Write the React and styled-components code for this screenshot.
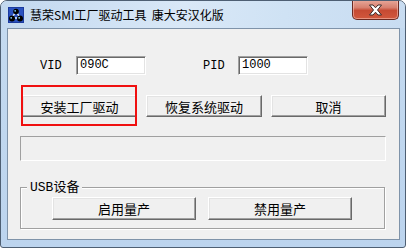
import React from 'react'
import styled, { createGlobalStyle } from 'styled-components'

////////Styles///////////
const Global = createGlobalStyle`
  html, body {
    margin: 0;
    padding: 0;
    background: #ffffff;
  }
`
const Window = styled.div`
  position: relative;
  width: 406px;
  height: 248px;
  box-sizing: border-box;
  border: 1px solid #4e5f73;
  border-radius: 7px 7px 3px 3px;
  background: linear-gradient(to bottom, #d6e6f6 0, #c4daf0 27px, #bcd4ee 100%);
  display: flex;
  flex-direction: column;
  overflow: hidden;
`
const TitleBar = styled.div`
  height: 27px;
  display: flex;
  align-items: flex-start;
  padding: 0 6px 0 7px;
  background: linear-gradient(100deg, #c2d8ef 0%, #d9e8f7 45%, #cfe2f4 70%, #c8dcf1 100%);
`
const AppIcon = styled.svg`
  width: 16px;
  height: 16px;
  margin-top: 6px;
  flex: none;
`
const Title = styled.span`
  margin-left: 6px;
  line-height: 27px;
  font-family: 'Noto Sans CJK SC', 'Microsoft YaHei', sans-serif;
  font-size: 12px;
  color: #000;
  white-space: pre;
`
const CloseButton = styled.div`
  margin-left: auto;
  margin-top: -1px;
  width: 47px;
  height: 20px;
  box-sizing: border-box;
  border: 1px solid #6b2a22;
  border-top: none;
  border-radius: 0 0 5px 5px;
  background: linear-gradient(to bottom, #e8a99b 0%, #d7806f 40%, #c64a33 55%, #d1583d 100%);
  box-shadow: inset 0 0 0 1px rgba(255, 210, 200, 0.5);
  display: flex;
  align-items: center;
  justify-content: center;
`
const Client = styled.div`
  margin: 0 5px 0 6px;
  height: 212px;
  box-sizing: border-box;
  border: 1px solid #7f93a9;
  background: #f0f0f0;
  position: relative;
  display: flex;
  flex-direction: column;
  font-family: 'Noto Sans CJK SC', sans-serif;
  color: #000;
`
const IdRow = styled.div`
  display: flex;
  align-items: center;
  margin: 27px 0 0 32px;
  height: 19px;
`
const IdLabel = styled.span`
  width: ${({ w }) => w}px;
  font-family: 'Liberation Mono', 'Noto Sans CJK SC', monospace;
  font-size: 12px;
`
const Edit = styled.div`
  width: 70px;
  height: 19px;
  box-sizing: border-box;
  margin-right: ${({ gap }) => gap || 0}px;
  background: #fff;
  border-top: 1px solid #a0a0a0;
  border-left: 1px solid #a0a0a0;
  border-right: 1px solid #fff;
  border-bottom: 1px solid #fff;
  box-shadow: inset 1px 1px 0 #696969, inset -1px -1px 0 #e3e3e3;
  padding-left: 3px;
  font-family: 'Liberation Mono', monospace;
  font-size: 12px;
  line-height: 17px;
`
const ButtonRow = styled.div`
  display: flex;
  gap: 9px;
  margin: 20px 0 0 14px;
`
const Button = styled.div`
  width: ${({ w }) => w || 115}px;
  height: ${({ h }) => h || 22}px;
  box-sizing: border-box;
  background: #f0f0f0;
  border-top: 1px solid #fff;
  border-left: 1px solid #fff;
  border-right: 1px solid #696969;
  border-bottom: 1px solid #696969;
  box-shadow: inset -1px -1px 0 #a0a0a0, inset 1px 1px 0 #e3e3e3;
  display: flex;
  align-items: center;
  justify-content: center;
  font-size: 13px;
`
const Status = styled.div`
  margin: 19px 0 0 12px;
  width: 366px;
  height: 25px;
  box-sizing: border-box;
  border-top: 1px solid #a0a0a0;
  border-left: 1px solid #a0a0a0;
  border-right: 1px solid #fff;
  border-bottom: 1px solid #fff;
`
const Group = styled.div`
  position: relative;
  margin: 26px 0 0 12px;
  width: 365px;
  height: 42px;
  box-sizing: border-box;
  border: 1px solid #a0a0a0;
  box-shadow: inset 1px 1px 0 #fff, 1px 1px 0 #fff;
  display: flex;
  gap: 12px;
  padding: 9px 0 0 31px;
`
const Legend = styled.span`
  position: absolute;
  top: -9px;
  left: 6px;
  padding: 0 3px;
  background: #f0f0f0;
  font-size: 13px;
  line-height: 17px;
  font-family: 'Liberation Mono', 'Noto Sans CJK SC', monospace;
`
const Mark = styled.div`
  position: absolute;
  left: 13px;
  top: 56px;
  width: 116px;
  height: 41px;
  box-sizing: border-box;
  border: 2px solid #f01010;
  pointer-events: none;
`

const App = () => {
  return (
    <>
      <Global />
      <Window>
        <TitleBar>
          <AppIcon viewBox="0 0 16 16">
            <rect x="0" y="0" width="16" height="16" fill="#1b3a9e" />
            <rect x="1" y="1" width="14" height="14" fill="#2a52c0" />
            <path d="M8 4 L4 11 M8 4 L12 11 M4 11 L12 11" stroke="#e8f4ff" strokeWidth="1.5" />
            <circle cx="8" cy="4.5" r="2.8" fill="#000" />
            <circle cx="4" cy="11.5" r="3" fill="#000" />
            <circle cx="12" cy="11.5" r="3" fill="#000" />
            <circle cx="7.2" cy="3.8" r="0.9" fill="#7fd0ff" />
            <circle cx="3.2" cy="10.8" r="0.9" fill="#7fd0ff" />
            <circle cx="11.2" cy="10.8" r="0.9" fill="#7fd0ff" />
          </AppIcon>
          <Title>慧荣SMI工厂驱动工具  康大安汉化版</Title>
          <CloseButton>
            <svg width="15" height="12" viewBox="0 0 15 12">
              <path
                d="M1.5 1 H5 L7.5 3.8 L10 1 H13.5 L9.5 6 L13.5 11 H10 L7.5 8.2 L5 11 H1.5 L5.5 6 Z"
                fill="#fff"
                stroke="#3d2a28"
                strokeWidth="1"
                strokeLinejoin="round"
              />
            </svg>
          </CloseButton>
        </TitleBar>
        <Client>
          <IdRow>
            <IdLabel w={36}>VID</IdLabel>
            <Edit gap={57}>090C</Edit>
            <IdLabel w={35}>PID</IdLabel>
            <Edit>1000</Edit>
          </IdRow>
          <ButtonRow>
            <Button>安装工厂驱动</Button>
            <Button w={116}>恢复系统驱动</Button>
            <Button>取消</Button>
          </ButtonRow>
          <Status />
          <Group>
            <Legend>USB设备</Legend>
            <Button w={144} h={23}>启用量产</Button>
            <Button w={144} h={23}>禁用量产</Button>
          </Group>
          <Mark />
        </Client>
      </Window>
    </>
  )
}

export default App
